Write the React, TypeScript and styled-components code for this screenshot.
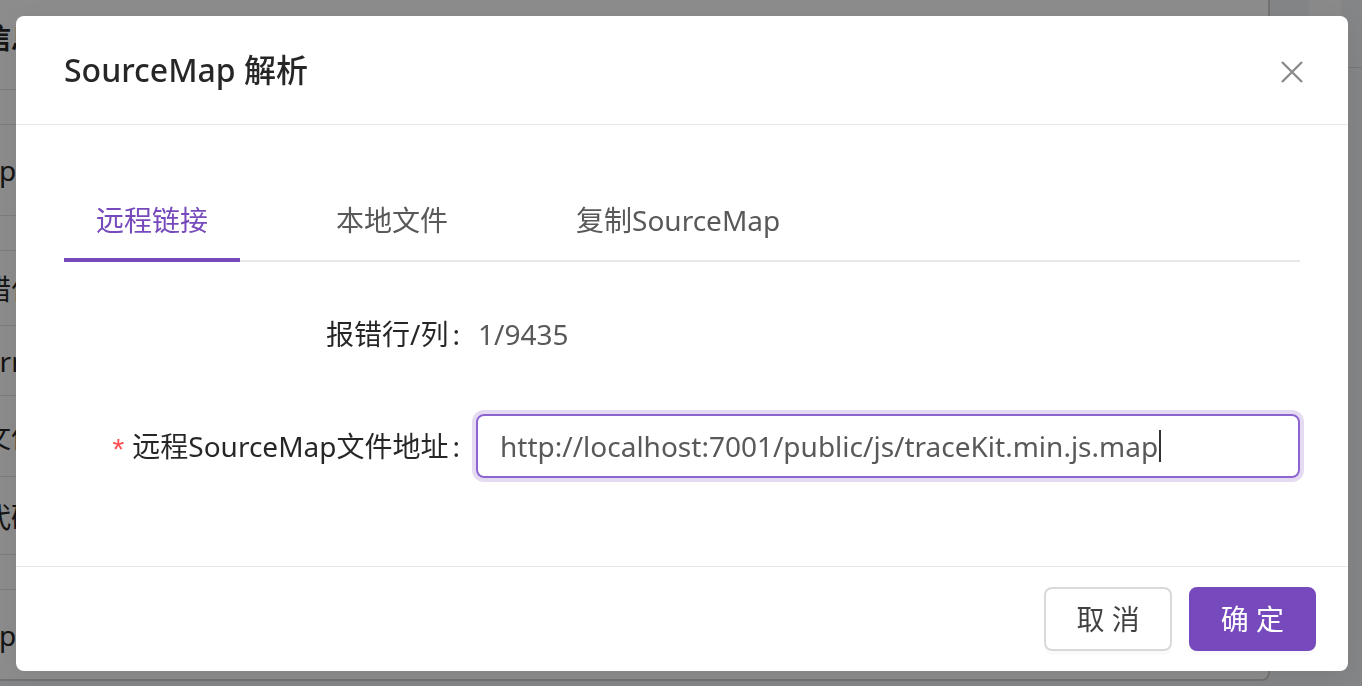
import React from "react";
import styled, { createGlobalStyle } from "styled-components";

const GlobalStyle = createGlobalStyle`
  html, body { margin: 0; padding: 0; }
  body {
    width: 1362px;
    height: 686px;
    overflow: hidden;
    font-family: "Noto Sans", "Noto Sans CJK SC", sans-serif;
    background: #f0f2f5;
  }
  * { box-sizing: border-box; }
`;

const PURPLE = "#764abc";

/* ---------- background page (under the mask) ---------- */
const Page = styled.div`
  display: flex;
  width: 1362px;
  height: 686px;
  overflow: hidden;
`;

const Card = styled.div`
  width: 1270px;
  height: 681px;
  background: #fff;
  border-bottom: 2px solid #d0d0d0;
  border-right: 2px solid #d0d0d0;
  border-bottom-right-radius: 8px;
  display: flex;
  flex-direction: column;
  overflow: hidden;
`;

const BgRow = styled.div<{ $h: number; $pb?: number }>`
  height: ${(p) => p.$h}px;
  flex: none;
  display: flex;
  align-items: center;
  padding-bottom: ${(p) => p.$pb ?? 0}px;
  border-bottom: 1px solid #e4e4e4;
  font-size: 28px;
  color: #262626;
  white-space: nowrap;
`;

const BgText = styled.span<{ $offset: number; $bold?: boolean }>`
  margin-left: ${(p) => p.$offset}px;
  font-weight: ${(p) => (p.$bold ? 600 : 400)};
`;

const Aside = styled.div`
  flex: 1;
  display: flex;
  flex-direction: column;
`;

const AsideTop = styled.div`
  height: 68px;
  border-bottom: 1px solid #d8d8d8;
  display: flex;
  justify-content: center;
  padding-left: 18px;
`;

const AsideBlock = styled.div`
  width: 32px;
  height: 100%;
  background: #fbfbfb;
`;

/* ---------- mask + modal ---------- */
const Mask = styled.div`
  position: fixed;
  inset: 0;
  background: rgba(0, 0, 0, 0.45);
`;

const Wrap = styled.div`
  position: fixed;
  inset: 0;
  display: flex;
  justify-content: center;
  align-items: flex-start;
  padding: 16px 0 0 2px;
`;

const Modal = styled.div`
  position: relative;
  width: 1332px;
  background: #fff;
  border-radius: 8px;
  box-shadow: 0 6px 32px rgba(0, 0, 0, 0.08);
  display: flex;
  flex-direction: column;
`;

const Header = styled.div`
  padding: 32px 48px;
  border-bottom: 1px solid #e8e8e8;
`;

const Title = styled.div`
  font-size: 32px;
  line-height: 44px;
  font-weight: 500;
  color: rgba(0, 0, 0, 0.85);
`;

const CloseButton = styled.button`
  position: absolute;
  top: 0;
  right: 0;
  width: 112px;
  height: 112px;
  border: 0;
  background: transparent;
  display: flex;
  align-items: center;
  justify-content: center;
  padding: 0;
  cursor: pointer;
`;

const Body = styled.div`
  padding: 48px 48px 88px;
  display: flex;
  flex-direction: column;
`;

const TabNav = styled.div`
  display: flex;
  gap: 64px;
  border-bottom: 2px solid #e8e8e8;
  margin-bottom: 40px;
`;

const Tab = styled.div<{ $active?: boolean }>`
  position: relative;
  padding: 25px 32px 18px;
  font-size: 28px;
  line-height: 44px;
  color: ${(p) => (p.$active ? PURPLE : "#595959")};
  white-space: nowrap;
  &::after {
    content: "";
    display: ${(p) => (p.$active ? "block" : "none")};
    position: absolute;
    left: 0;
    right: 0;
    bottom: -2px;
    height: 4px;
    background: ${PURPLE};
  }
`;

const Form = styled.div`
  display: flex;
  flex-direction: column;
  gap: 48px;
`;

const FormItem = styled.div`
  display: grid;
  grid-template-columns: 412px 1fr;
  align-items: center;
  min-height: 64px;
`;

const Label = styled.div`
  display: flex;
  justify-content: flex-end;
  align-items: center;
  font-size: 28px;
  line-height: 64px;
  color: rgba(0, 0, 0, 0.85);
  white-space: nowrap;
`;

const Required = styled.span`
  color: #ff4d4f;
  font-size: 30px;
  font-family: "Liberation Sans", sans-serif;
  margin-right: 8px;
  position: relative;
  top: 3px;
`;

const Colon = styled.span`
  margin: 0 16px 0 4px;
`;

const ValueText = styled.div`
  font-size: 28px;
  line-height: 64px;
  color: #595959;
  padding-left: 2px;
`;

const InputBox = styled.div`
  height: 64px;
  border: 2px solid #8d64cf;
  border-radius: 8px;
  box-shadow: 0 0 0 4px rgba(118, 74, 188, 0.2);
  padding: 0 22px;
  display: flex;
  align-items: center;
  font-size: 28px;
  color: #595959;
  white-space: nowrap;
`;

const Caret = styled.span`
  display: inline-block;
  width: 2px;
  height: 32px;
  background: #333;
  margin-left: 1px;
`;

const Footer = styled.div`
  border-top: 1px solid #e8e8e8;
  padding: 20px 32px 20px;
  display: flex;
  justify-content: flex-end;
  gap: 17px;
`;

const Button = styled.button<{ $primary?: boolean }>`
  height: 64px;
  padding: 0 30px;
  border-radius: 8px;
  font-family: inherit;
  font-size: 28px;
  line-height: 1;
  border: 2px solid ${(p) => (p.$primary ? PURPLE : "#d9d9d9")};
  background: ${(p) => (p.$primary ? PURPLE : "#fff")};
  color: ${(p) => (p.$primary ? "#fff" : "rgba(0,0,0,0.75)")};
  box-shadow: 0 4px 0 rgba(0, 0, 0, 0.02);
  letter-spacing: 0;
  cursor: pointer;
`;

const bgRows: { h: number; text?: string; offset?: number; bold?: boolean; pb?: number }[] = [
  { h: 90, text: "信息", offset: -17, bold: true, pb: 16 },
  { h: 35 },
  { h: 91, text: "Map", offset: -42 },
  { h: 35 },
  { h: 75, text: "错位", offset: -17 },
  { h: 70, text: "Error", offset: -16 },
  { h: 81, text: "文件", offset: -17 },
  { h: 78, text: "代码", offset: -17 },
  { h: 35 },
  { h: 90, text: "Map", offset: -42 },
];

export default function App() {
  return (
    <>
      <GlobalStyle />
      <Page>
        <Card>
          {bgRows.map((r, i) => (
            <BgRow key={i} $h={r.h} $pb={r.pb}>
              {r.text && (
                <BgText $offset={r.offset ?? 0} $bold={r.bold}>
                  {r.text}
                </BgText>
              )}
            </BgRow>
          ))}
        </Card>
        <Aside>
          <AsideTop>
            <AsideBlock />
          </AsideTop>
        </Aside>
      </Page>
      <Mask />
      <Wrap>
        <Modal>
          <Header>
            <Title>SourceMap 解析</Title>
          </Header>
          <CloseButton aria-label="Close">
            <svg width="24" height="24" viewBox="0 0 24 24">
              <path d="M2 2 L22 22 M22 2 L2 22" stroke="#8c8c8c" strokeWidth="2.4" strokeLinecap="butt" fill="none" />
            </svg>
          </CloseButton>
          <Body>
            <TabNav>
              <Tab $active>远程链接</Tab>
              <Tab>本地文件</Tab>
              <Tab>复制SourceMap</Tab>
            </TabNav>
            <Form>
              <FormItem>
                <Label>
                  报错行/列<Colon>:</Colon>
                </Label>
                <ValueText>1/9435</ValueText>
              </FormItem>
              <FormItem>
                <Label>
                  <Required>*</Required>远程SourceMap文件地址<Colon>:</Colon>
                </Label>
                <InputBox>
                  http://localhost:7001/public/js/traceKit.min.js.map
                  <Caret />
                </InputBox>
              </FormItem>
            </Form>
          </Body>
          <Footer>
            <Button>取 消</Button>
            <Button $primary>确 定</Button>
          </Footer>
        </Modal>
      </Wrap>
    </>
  );
}
